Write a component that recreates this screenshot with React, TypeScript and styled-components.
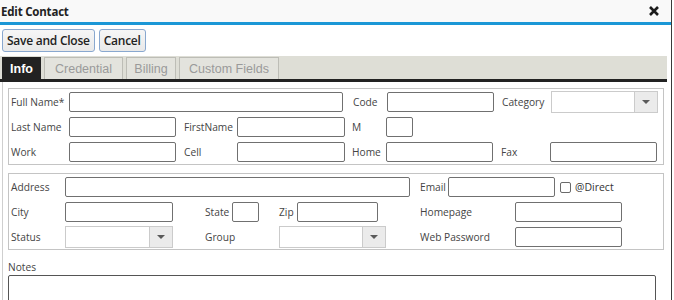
import React from 'react';
import styled, { createGlobalStyle } from 'styled-components';

const GlobalStyle = createGlobalStyle`
  html, body {
    margin: 0;
    padding: 0;
    background: #fff;
  }
  body {
    font-family: 'Open Sans', 'Noto Sans', sans-serif;
    color: #444;
  }
`;

const Dialog = styled.div`
  width: 671px;
  height: 300px;
  overflow: hidden;
  border-right: 1px solid #3a3a3a;
  display: flex;
  flex-direction: column;

  & > * {
    flex-shrink: 0;
  }
`;

const TitleBar = styled.div`
  height: 22px;
  background: #f9f9f9;
  border-bottom: 3px solid #1b97d6;
  display: flex;
  align-items: center;
  justify-content: space-between;
  padding: 0 12px 0 1px;

  & > h1 {
    margin: 0;
    font-size: 11.5px;
    font-weight: 700;
    letter-spacing: -0.2px;
    color: #222;
  }
`;

const CloseIcon = styled.svg`
  width: 10px;
  height: 10px;
  stroke: #1c1c1c;
  stroke-width: 2.6;
`;

const Toolbar = styled.div`
  display: flex;
  gap: 4px;
  padding: 4px 2px;
`;

const Button = styled.button`
  height: 23px;
  padding: 0 4px;
  background: linear-gradient(#f6f6f6, #e9e9e9);
  border: 1px solid #89a8cf;
  border-radius: 3px;
  font-family: 'Open Sans', sans-serif;
  font-size: 12px;
  font-weight: 600;
  letter-spacing: -0.25px;
  color: #222;
`;

const TabBar = styled.div`
  height: 23px;
  background: #deded6;
  border-bottom: 3px solid #222;
  margin-right: 4px;
  display: flex;
  align-items: flex-end;
  gap: 3px;
  padding-left: 2px;
`;

const Tab = styled.div<{ $w: number; $active?: boolean }>`
  width: ${p => p.$w}px;
  height: 22px;
  box-sizing: border-box;
  display: flex;
  align-items: center;
  justify-content: center;
  font-family: 'Liberation Sans', Arial, sans-serif;
  font-size: 12.5px;
  font-weight: ${p => (p.$active ? 700 : 400)};
  color: ${p => (p.$active ? '#fff' : '#9a9a9a')};
  background: ${p => (p.$active ? '#222' : '#e3e3dd')};
  border: 1px solid ${p => (p.$active ? '#222' : '#bdbdb6')};
  border-bottom: none;
`;

const Panel = styled.div`
  flex: 1;
  margin-left: 2px;
  border-left: 1px solid #cfcfcf;
  padding: 6px 0 0 5px;
  display: flex;
  flex-direction: column;
  gap: 8px;
`;

const Group = styled.div`
  width: 652px;
  border: 1px solid #c4c4c4;
  padding: 3px 0 2px 2px;
  display: flex;
  flex-direction: column;
  gap: 5px;
`;

const Row = styled.div`
  display: flex;
  align-items: center;
  height: 20px;
`;

const Label = styled.span<{ $w: number; $pl?: number }>`
  width: ${p => p.$w}px;
  padding-left: ${p => p.$pl ?? 0}px;
  flex-shrink: 0;
  font-size: 10.2px;
  color: #444;
  white-space: nowrap;
`;

const Input = styled.input<{ $w: number }>`
  width: ${p => p.$w}px;
  height: 20px;
  box-sizing: border-box;
  flex-shrink: 0;
  border: 1px solid #707070;
  border-radius: 2px;
  background: #fff;
  padding: 0 3px;
  margin: 0;
`;

const Select = styled.div<{ $w: number }>`
  width: ${p => p.$w}px;
  height: 22px;
  box-sizing: border-box;
  flex-shrink: 0;
  border: 1px solid #cbcbcb;
  background: #fff;
  display: flex;
  justify-content: flex-end;

  & > span {
    width: 22px;
    border-left: 1px solid #cbcbcb;
    background: #ebebeb;
    display: flex;
    align-items: center;
    justify-content: center;
  }

  & > span::after {
    content: '';
    border-left: 4px solid transparent;
    border-right: 4px solid transparent;
    border-top: 4px solid #5a5a5a;
  }
`;

const Check = styled.span`
  width: 11px;
  height: 11px;
  box-sizing: border-box;
  border: 1px solid #6a6a6a;
  border-radius: 2px;
  margin: 0 4px 0 5px;
`;

const CheckText = styled.span`
  font-size: 10.5px;
  color: #333;
`;

const NotesLabel = styled.div`
  font-size: 10.2px;
  color: #444;
  margin-top: 2px;
`;

const Notes = styled.textarea`
  width: 648px;
  height: 60px;
  box-sizing: border-box;
  border: 1px solid #555;
  border-radius: 2px;
  margin: 1px 0 0;
  resize: none;
`;

const Dropdown = ({ w }: { w: number }) => (
  <Select $w={w}>
    <span />
  </Select>
);

const App = (): React.ReactElement => (
  <>
    <GlobalStyle />
    <Dialog>
      <TitleBar>
        <h1>Edit Contact</h1>
        <CloseIcon viewBox="0 0 10 10">
          <path d="M1 1 L9 9 M9 1 L1 9" />
        </CloseIcon>
      </TitleBar>
      <Toolbar>
        <Button>Save and Close</Button>
        <Button>Cancel</Button>
      </Toolbar>
      <TabBar>
        <Tab $w={39} $active>Info</Tab>
        <Tab $w={79}>Credential</Tab>
        <Tab $w={50}>Billing</Tab>
        <Tab $w={100}>Custom Fields</Tab>
      </TabBar>
      <Panel>
        <Group>
          <Row>
            <Label $w={58}>Full Name*</Label>
            <Input $w={274} />
            <Label $w={34} $pl={10}>Code</Label>
            <Input $w={107} />
            <Label $w={49} $pl={8}>Category</Label>
            <Dropdown w={107} />
          </Row>
          <Row>
            <Label $w={58}>Last Name</Label>
            <Input $w={107} />
            <Label $w={53} $pl={8}>FirstName</Label>
            <Input $w={108} />
            <Label $w={34} $pl={7}>M</Label>
            <Input $w={27} />
          </Row>
          <Row>
            <Label $w={58}>Work</Label>
            <Input $w={107} />
            <Label $w={53} $pl={8}>Cell</Label>
            <Input $w={108} />
            <Label $w={34} $pl={7}>Home</Label>
            <Input $w={107} />
            <Label $w={49} $pl={8}>Fax</Label>
            <Input $w={107} />
          </Row>
        </Group>
        <Group>
          <Row>
            <Label $w={54}>Address</Label>
            <Input $w={345} />
            <Label $w={28} $pl={10}>Email</Label>
            <Input $w={107} />
            <Check />
            <CheckText>@Direct</CheckText>
          </Row>
          <Row>
            <Label $w={54}>City</Label>
            <Input $w={108} />
            <Label $w={27} $pl={32}>State</Label>
            <Input $w={27} />
            <Label $w={18} $pl={20}>Zip</Label>
            <Input $w={81} />
            <Label $w={95} $pl={42}>Homepage</Label>
            <Input $w={107} />
          </Row>
          <Row>
            <Label $w={54}>Status</Label>
            <Dropdown w={108} />
            <Label $w={74} $pl={32}>Group</Label>
            <Dropdown w={107} />
            <Label $w={95} $pl={34}>Web Password</Label>
            <Input $w={107} />
          </Row>
        </Group>
        <div>
          <NotesLabel>Notes</NotesLabel>
          <Notes />
        </div>
      </Panel>
    </Dialog>
  </>
);

export default App;
